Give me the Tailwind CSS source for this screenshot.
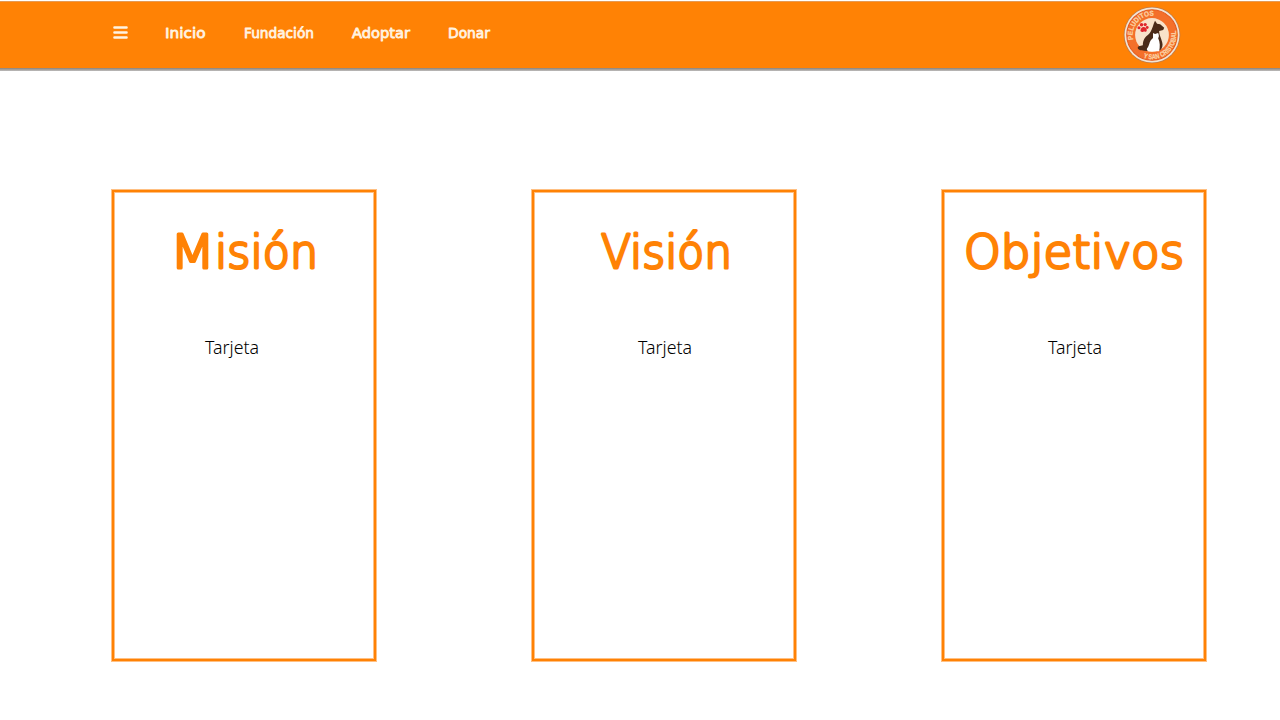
<!DOCTYPE html>
<html lang="es">
<head>
<meta charset="utf-8">
<title>Fundación</title>
<script src="https://cdn.jsdelivr.net/npm/@tailwindcss/browser@4"></script>
</head>
<body class="h-[720px] overflow-hidden bg-white pt-px font-['Comic_Sans_MS','DejaVu_Sans',sans-serif]">
<header class="h-[70px] bg-linear-to-b from-[#85786e] from-95% to-[#bdbdbd] to-100%">
<div class="flex h-[67px] items-start border-t border-[#e59a55] bg-[#ff8205] pr-[100px] pl-[113px]">
  <button class="mt-6 h-[13px] w-[15px]" aria-label="Menú">
    <svg class="block" width="15" height="13" viewBox="0 0 15 13" stroke="#fff3e2" stroke-width="2.4" stroke-linecap="round"><path d="M1.4 1.5h12.2M1.4 6.5h12.2M1.4 11.5h12.2"/></svg>
  </button>
  <nav class="ml-[37px] flex gap-[38px] pt-[16px] text-[14.5px]">
    <a><svg class="block overflow-visible" width="41" height="28" fill="#fff3e2" stroke="#fff3e2" stroke-width=".8" stroke-linejoin="round"><text y="19.5" textLength="40.5" lengthAdjust="spacingAndGlyphs">Inicio</text></svg></a>
    <a><svg class="block overflow-visible" width="70" height="28" fill="#fff3e2" stroke="#fff3e2" stroke-width=".8" stroke-linejoin="round"><text y="19.5" textLength="70" lengthAdjust="spacingAndGlyphs">Fundación</text></svg></a>
    <a><svg class="block overflow-visible" width="58" height="28" fill="#fff3e2" stroke="#fff3e2" stroke-width=".8" stroke-linejoin="round"><text y="19.5" textLength="58" lengthAdjust="spacingAndGlyphs">Adoptar</text></svg></a>
    <a><svg class="block overflow-visible" width="42" height="28" fill="#fff3e2" stroke="#fff3e2" stroke-width=".8" stroke-linejoin="round"><text y="19.5" textLength="42" lengthAdjust="spacingAndGlyphs">Donar</text></svg></a>
  </nav>
  <svg class="mt-[5px] ml-auto block overflow-visible" width="56" height="56" viewBox=".5 .5 55 55">
    <defs>
      <path id="arc-top" d="M9.6 32.5A19 19 0 0 1 33 9.7"/>
      <path id="arc-bottom" d="M19.5 50.2A23.8 23.8 0 0 0 51 22"/>
    </defs>
    <circle cx="28" cy="28" r="27.8" fill="#c07a48"/>
    <circle cx="28" cy="28" r="27" fill="#f2e4d4"/>
    <circle cx="28" cy="28" r="24.8" fill="#f4702a" stroke="#e55a1c"/>
    <circle cx="28" cy="28" r="16.6" fill="#f8e2ca"/>
    <path d="M31 14l2 3 3 .5 4 3.5-1 2-4 1c0 4 2 7 3 11 1 3 0 6-2 8h-9c-3 1-6 1-9 0-4 0-5-3-3-4l4-1c0-5 2-8 6-11 3-3 4-9 6-13z" fill="#4a2a18"/>
    <path d="M29 26l2 1 3-1c1 2 1 4 0 5 2 4 2 9 1 13h-9c-3 0-4-2-2-4 2-3 1-6 5-9z" fill="#fff"/>
    <g fill="#e0262d"><circle cx="15.2" cy="20.8" r="1.5"/><circle cx="17.7" cy="17.9" r="1.7"/><circle cx="21.3" cy="17.7" r="1.6"/><circle cx="23.3" cy="20.6" r="1.4"/><path d="M19.6 20.2c2 0 4.1 2.4 3 4.1-1 1-2 0-3.1.5-1.3.6-3 .2-2.8-1.4.2-1.5 1.4-3.1 2.9-3.2z"/></g>
    <g fill="#fbd3a6" stroke="#fbd3a6" stroke-width=".25" class="font-['Liberation_Sans',sans-serif] text-[7px] font-bold">
      <text><textPath href="#arc-top" textLength="36" lengthAdjust="spacingAndGlyphs">PELUDITOS</textPath></text>
      <text><textPath href="#arc-bottom" textLength="50" lengthAdjust="spacingAndGlyphs">Y SAN CRISTOBAL</textPath></text>
    </g>
  </svg>
</div>
</header>
<main class="flex pt-[118px] pl-[111px]">
  <section class="h-[473px] w-[266px] border border-[#ffc083]">
    <div class="h-full border-2 border-[#ff8205]"><div class="h-full border border-[#ffc083]">
      <h1><svg class="block overflow-visible" width="258" height="110" fill="#ff8205" stroke="#ff8205" stroke-width="3" stroke-linejoin="round"><text y="75" class="text-[47px] font-extralight"><tspan x="55" textLength="45" lengthAdjust="spacingAndGlyphs">M</tspan><tspan x="100" textLength="103" lengthAdjust="spacingAndGlyphs">isión</tspan></text></svg></h1>
      <p class="font-['Segoe_UI','Noto_Sans',sans-serif] text-[18px] text-black"><svg class="block overflow-visible" width="258" height="60"><text x="90" y="51" class="font-light" textLength="54" lengthAdjust="spacingAndGlyphs">Tarjeta</text></svg></p>
    </div></div>
  </section>
  <section class="ml-[154px] h-[473px] w-[266px] border border-[#ffc083]">
    <div class="h-full border-2 border-[#ff8205]"><div class="h-full border border-[#ffc083]">
      <h1><svg class="block overflow-visible" width="258" height="110" fill="#ff8205" stroke="#ff8205" stroke-width="3" stroke-linejoin="round"><text x="66" y="75" class="text-[47px] font-extralight" textLength="131" lengthAdjust="spacingAndGlyphs">Visión</text></svg></h1>
      <p class="font-['Segoe_UI','Noto_Sans',sans-serif] text-[18px] text-black"><svg class="block overflow-visible" width="258" height="60"><text x="103" y="51" class="font-light" textLength="54" lengthAdjust="spacingAndGlyphs">Tarjeta</text></svg></p>
    </div></div>
  </section>
  <section class="ml-36 h-[473px] w-[266px] border border-[#ffc083]">
    <div class="h-full border-2 border-[#ff8205]"><div class="h-full border border-[#ffc083]">
      <h1><svg class="block overflow-visible" width="258" height="110" fill="#ff8205" stroke="#ff8205" stroke-width="3" stroke-linejoin="round"><text x="19" y="75" class="text-[47px] font-extralight" textLength="220" lengthAdjust="spacingAndGlyphs">Objetivos</text></svg></h1>
      <p class="font-['Segoe_UI','Noto_Sans',sans-serif] text-[18px] text-black"><svg class="block overflow-visible" width="258" height="60"><text x="103" y="51" class="font-light" textLength="54" lengthAdjust="spacingAndGlyphs">Tarjeta</text></svg></p>
    </div></div>
  </section>
</main>
</body>
</html>
